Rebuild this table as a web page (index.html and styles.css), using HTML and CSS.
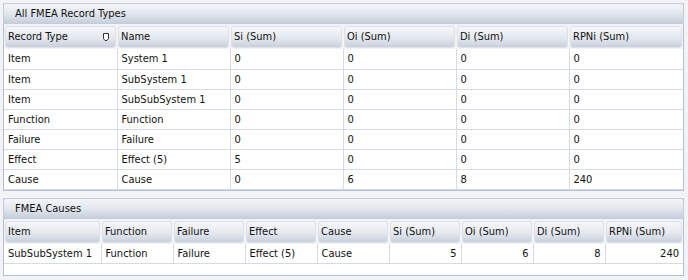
FILE: index.html
```html
<!DOCTYPE html>
<html>
<head>
<meta charset="utf-8">
<link rel="stylesheet" href="styles.css">
</head>
<body>
<div class="panel p1">
  <div class="title">All FMEA Record Types</div>
  <table class="grid g1">
    <colgroup><col class="c113"><col class="c113"><col class="c113"><col class="c113"><col class="c113"><col></colgroup>
    <thead>
      <tr>
        <th><div class="hc"><span>Record Type</span><svg class="flt" width="6" height="9" viewBox="0 0 6 9"><path d="M0.5 0.5 H5.5 V5.5 L4 7.5 H2 L0.5 5.5 Z" fill="#fff" stroke="#333" stroke-width="1"/></svg></div></th>
        <th><div class="hc">Name</div></th>
        <th><div class="hc">Si (Sum)</div></th>
        <th><div class="hc">Oi (Sum)</div></th>
        <th><div class="hc">Di (Sum)</div></th>
        <th><div class="hc">RPNi (Sum)</div></th>
      </tr>
    </thead>
    <tbody>
      <tr><td>Item</td><td>System 1</td><td>0</td><td>0</td><td>0</td><td>0</td></tr>
      <tr><td>Item</td><td>SubSystem 1</td><td>0</td><td>0</td><td>0</td><td>0</td></tr>
      <tr><td>Item</td><td>SubSubSystem 1</td><td>0</td><td>0</td><td>0</td><td>0</td></tr>
      <tr><td>Function</td><td>Function</td><td>0</td><td>0</td><td>0</td><td>0</td></tr>
      <tr><td>Failure</td><td>Failure</td><td>0</td><td>0</td><td>0</td><td>0</td></tr>
      <tr><td>Effect</td><td>Effect (5)</td><td>5</td><td>0</td><td>0</td><td>0</td></tr>
      <tr><td>Cause</td><td>Cause</td><td>0</td><td>6</td><td>8</td><td>240</td></tr>
    </tbody>
  </table>
</div>
<div class="panel p2">
  <div class="title">FMEA Causes</div>
  <table class="grid g2">
    <colgroup><col class="c97"><col class="c72"><col class="c72"><col class="c72"><col class="c72"><col class="c72"><col class="c72"><col class="c72"><col></colgroup>
    <thead>
      <tr>
        <th><div class="hc">Item</div></th>
        <th><div class="hc">Function</div></th>
        <th><div class="hc">Failure</div></th>
        <th><div class="hc">Effect</div></th>
        <th><div class="hc">Cause</div></th>
        <th><div class="hc">Si (Sum)</div></th>
        <th><div class="hc">Oi (Sum)</div></th>
        <th><div class="hc">Di (Sum)</div></th>
        <th><div class="hc">RPNi (Sum)</div></th>
      </tr>
    </thead>
    <tbody>
      <tr><td>SubSubSystem 1</td><td>Function</td><td>Failure</td><td>Effect (5)</td><td>Cause</td><td class="num">5</td><td class="num">6</td><td class="num">8</td><td class="num">240</td></tr>
    </tbody>
  </table>
  <div class="empty"></div>
</div>
</body>
</html>
```
FILE: styles.css
```css
html, body {
  margin: 0;
  padding: 0;
  background: #f2f3f6;
}
body {
  padding: 3px 3px 0 3px;
  font-family: "DejaVu Sans Condensed", "DejaVu Sans", sans-serif;
  font-size: 11px;
  color: #111;
}
.panel {
  background: #fff;
  border: 1px solid #b4bfcf;
  border-top: none;
  box-sizing: border-box;
  width: 681px;
}
.p2 {
  margin-top: 7px;
}
.title {
  height: 21px;
  line-height: 20px;
  box-sizing: border-box;
  padding-left: 11px;
  margin: 0 -1px;
  border: 1px solid #c3ccd9;
  border-radius: 3px 3px 0 0;
  background: linear-gradient(#f3f5f8, #e3e7ee 50%, #c7cfdc);
}
.grid {
  border-collapse: collapse;
  table-layout: fixed;
  width: 100%;
  background: #fff;
}
.c113 { width: 113px; }
.c97 { width: 97px; }
.c72 { width: 72px; }
.grid thead th {
  padding: 2px 1px 1px 1px;
  height: 25px;
  box-sizing: border-box;
  font-weight: normal;
  text-align: left;
  background: #f2f3f6;
}
.hc {
  height: 22px;
  line-height: 20px;
  box-sizing: border-box;
  padding-left: 2px;
  border: 1px solid #dde2ea;
  border-radius: 3px;
  background: linear-gradient(#f6f7fa, #e4e8ef 55%, #c9d0dc);
  display: flex;
  align-items: center;
  white-space: nowrap;
  overflow: hidden;
}
.hc span { flex: 1; }
.flt { margin-right: 6px; }
.grid tbody td {
  height: 20px;
  box-sizing: border-box;
  padding: 0 4px;
  border-right: 1px solid #d5dbe4;
  border-bottom: 1px solid #d5dbe4;
  white-space: nowrap;
  overflow: hidden;
  line-height: 19px;
}
.grid tbody td:last-child { border-right: none; }
.grid tbody td.num { text-align: right; }
.empty { height: 11px; }
```
